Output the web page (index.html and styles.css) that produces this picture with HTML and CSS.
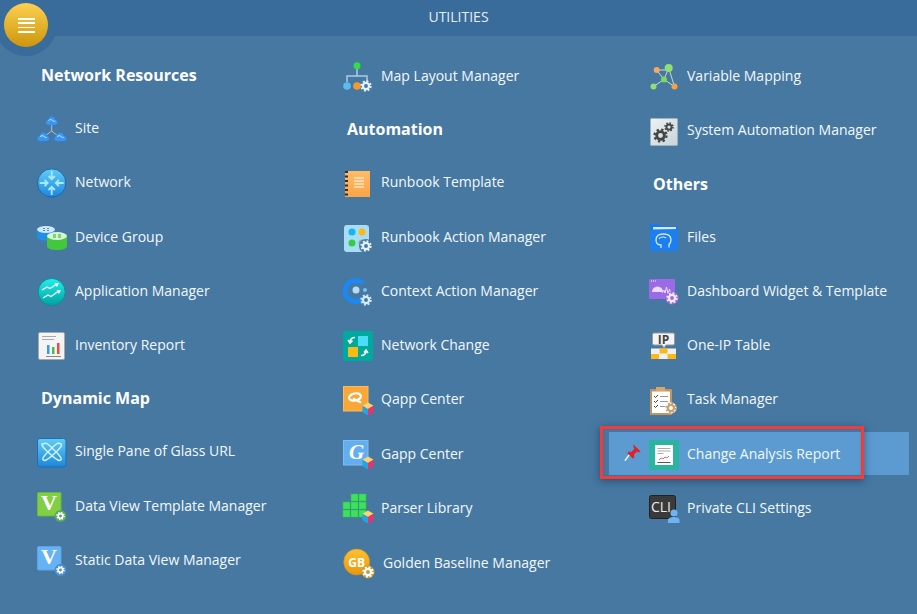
FILE: index.html
```html
<!DOCTYPE html>
<html lang="en">
<head>
<meta charset="utf-8">
<title>Utilities</title>
<link rel="stylesheet" href="styles.css">
</head>
<body>
<svg class="defs" aria-hidden="true">
  <defs>
    <linearGradient id="gNet" x1="0" y1="0" x2="0" y2="1"><stop offset="0" stop-color="#62cdf5"/><stop offset="1" stop-color="#1e86dc"/></linearGradient>
    <linearGradient id="gApp" x1="0" y1="0" x2="0" y2="1"><stop offset="0" stop-color="#20f0f0"/><stop offset="1" stop-color="#00a0a0"/></linearGradient>
    <linearGradient id="gGold" x1="0" y1="0" x2="0" y2="1"><stop offset="0" stop-color="#fdc132"/><stop offset="1" stop-color="#e8980c"/></linearGradient>
    <linearGradient id="gSys" x1="0" y1="0" x2="1" y2="1"><stop offset="0" stop-color="#eef2f3"/><stop offset="1" stop-color="#c6d4da"/></linearGradient>
    <linearGradient id="gBook" x1="0" y1="0" x2="0" y2="1"><stop offset="0" stop-color="#ffbb66"/><stop offset="1" stop-color="#fba448"/></linearGradient>
    <symbol id="gear" viewBox="0 0 16 16">
      <circle cx="8" cy="8" r="6.4" fill="none" stroke="currentColor" stroke-width="2.4" stroke-dasharray="2.51 2.51"/>
      <circle cx="8" cy="8" r="4.1" fill="none" stroke="currentColor" stroke-width="3"/>
    </symbol>
    <symbol id="cube" viewBox="0 0 12 14">
      <path d="M6 0.5 11.5 3.700 6 7 .5 3.700z" fill="#fdd36a"/>
      <path d="M.5 3.700 6 7v6.500L.5 10.300z" fill="#2aa2e0"/>
      <path d="M11.500 3.700 6 7v6.500l5.500-3.200z" fill="#e8336b"/>
    </symbol>
    <symbol id="cloud" viewBox="0 0 14 10">
      <rect x=".5" y="4.500" width="13" height="5.200" rx="2.600" fill="#3b97f5" stroke="#2a7fe0" stroke-width=".5"/>
      <circle cx="7" cy="4.200" r="3.700" fill="#3b97f5" stroke="#2a7fe0" stroke-width=".5"/>
      <rect x="2" y="4.800" width="10" height="3" fill="#3b97f5"/>
      <path d="M3.500 5C5 3.500 6.500 3.500 8 4.800s2 1 3 .6" fill="none" stroke="#cfe8ff" stroke-width="1"/>
    </symbol>
  </defs>
</svg>

<header class="topbar">UTILITIES</header>
<button class="menu-btn" type="button" aria-label="Menu"><span class="menu-lines"></span></button>

<main class="columns">
  <section class="col">
    <h2 class="heading">Network Resources</h2>
    <div class="row"><svg class="ico" viewBox="0 0 32 32"><path d="M15.700 12v7M15.700 19 9 24M15.700 19 22 24" stroke="#a9bfd0" stroke-width="1" fill="none"/><use href="#cloud" x="9.200" y="4" width="13" height="9.300"/><use href="#cloud" x=".5" y="20" width="13.500" height="9.600"/><use href="#cloud" x="17.500" y="20" width="13.500" height="9.600"/></svg><span class="label">Site</span></div>
    <div class="row"><svg class="ico" viewBox="0 0 32 32"><circle cx="15.700" cy="17" r="14.200" fill="url(#gNet)" stroke="#1b68ae" stroke-width="1"/><g stroke="#a6ebf7" stroke-width="1.800" fill="none"><path d="M15.700 5v8M12.500 10l3.200 3.200L18.900 10"/><path d="M15.700 29v-8M12.500 24l3.200-3.200 3.200 3.200"/><path d="M3.700 17h8M8.500 13.800l3.200 3.200-3.200 3.200"/><path d="M27.700 17h-8M22.900 13.800 19.700 17l3.200 3.200"/></g></svg><span class="label">Network</span></div>
    <div class="row"><svg class="ico" viewBox="0 0 32 32"><path d="M1 8.500V16c0 2 4 3.500 9 3.500s9-1.500 9-3.500V8.500z" fill="#1f8fe8"/><ellipse cx="10" cy="8.500" rx="9" ry="3.500" fill="#cfe8fb"/><path d="M7 7.500h2M11 9.500h2M7 9.500h2M11 7.500h2" stroke="#4a8fd0" stroke-width="1"/><path d="M11 15v10c0 2.500 4 4 10 4s10-1.500 10-4V15z" fill="#41c83c"/><ellipse cx="21" cy="15" rx="10" ry="4" fill="#d6f5cf"/><path d="M17 14h3M22 16h3M17 16h3M22 14h3" stroke="#3aa538" stroke-width="1"/></svg><span class="label">Device Group</span></div>
    <div class="row"><svg class="ico" viewBox="0 0 32 32"><circle cx="15.700" cy="17" r="13.600" fill="url(#gApp)" stroke="#148a96" stroke-width="1"/><g stroke="#fff" stroke-width="1.200" fill="none"><path d="M6 15l5-3 3 1.500 6-4"/><path d="M7 23l5-3 3 1.500 7-5"/></g><path d="M23 8l-4.500.5 2.500 3.500zM25 15l-4.500.5 2.500 3.500z" fill="#fff"/></svg><span class="label">Application Manager</span></div>
    <div class="row"><svg class="ico" viewBox="0 0 32 32"><rect x="2.500" y="3.500" width="26" height="27" rx="1.500" fill="#f4f4f4" stroke="#a8a8a8"/><path d="M6 7.500h14M6 10.500h12" stroke="#aaa" stroke-width="1"/><rect x="11" y="16" width="2.500" height="9" fill="#3c9ae0"/><rect x="16" y="18" width="2.500" height="7" fill="#56b84c"/><rect x="21" y="14" width="2.500" height="11" fill="#ea4a40"/><path d="M10 27.500h15" stroke="#888" stroke-width="1"/></svg><span class="label">Inventory Report</span></div>
    <h2 class="heading">Dynamic Map</h2>
    <div class="row"><svg class="ico" viewBox="0 0 32 32"><rect x="1.500" y="3.500" width="28.500" height="28.500" rx="2.500" fill="url(#gNet)" stroke="#1d6dbb"/><g fill="none" stroke="#cdf3fb" stroke-width="1.500"><path d="M7 9c4-2 6 1 9 4 3 3 7 6 9 10 1 2-1 3-3 2-4-2-7-5-10-8-3-3-7-6-6-8z"/><path d="M25 9c-4-2-6 1-9 4-3 3-7 6-9 10-1 2 1 3 3 2 4-2 7-5 10-8 3-3 7-6 5-8z"/></g></svg><span class="label">Single Pane of Glass URL</span></div>
    <div class="row"><svg class="ico" viewBox="0 0 32 32"><rect x="1.500" y="2.500" width="23.500" height="23.500" rx="1" fill="#82cf46" stroke="#6cb63a"/><text x="13" y="20" class="v-letter">V</text><circle cx="24.500" cy="26" r="6" fill="#5aa860"/><use href="#gear" x="20" y="21.500" width="9" height="9" color="#fff"/></svg><span class="label">Data View Template Manager</span></div>
    <div class="row"><svg class="ico" viewBox="0 0 32 32"><rect x="1.500" y="2.500" width="23.500" height="23.500" rx="1" fill="#66b2f5" stroke="#5aa3e6"/><text x="13" y="20" class="v-letter">V</text><circle cx="24.500" cy="26" r="6" fill="#4b8fd0"/><use href="#gear" x="20" y="21.500" width="9" height="9" color="#fff"/></svg><span class="label">Static Data View Manager</span></div>
  </section>

  <section class="col">
    <div class="row"><svg class="ico" viewBox="0 0 32 32"><path d="M15 6v10M5 22v-6h20v6" fill="none" stroke="#a9cbea" stroke-width="1.500"/><circle cx="15" cy="5.700" r="3.500" fill="#30e040"/><circle cx="5" cy="26" r="3.800" fill="#5bbcf0"/><circle cx="15" cy="26" r="3.800" fill="#f59a2a"/><use href="#gear" x="18" y="20" width="12" height="12" color="#e4f3fd"/></svg><span class="label">Map Layout Manager</span></div>
    <h2 class="heading">Automation</h2>
    <div class="row"><svg class="ico" viewBox="0 0 32 32"><rect x="3" y="5" width="25" height="26" fill="url(#gBook)"/><path d="M4.500 5v26" stroke="#2f2f2f" stroke-width="3" stroke-dasharray="2 2.500"/><path d="M12 12h10M12 15h10M12 18h10M12 21h10" stroke="#fff" stroke-width="1"/></svg><span class="label">Runbook Template</span></div>
    <div class="row"><svg class="ico" viewBox="0 0 32 32"><rect x="2" y="4" width="25" height="27" rx="3" fill="#a9ddf5"/><circle cx="10" cy="11" r="3.500" fill="#13b5f5"/><circle cx="20" cy="11" r="3.500" fill="#fdb913"/><circle cx="10" cy="22" r="3.500" fill="#30d040"/><circle cx="20" cy="22" r="3.500" fill="#8aa"/><circle cx="24" cy="25" r="7" fill="#4678a2"/><use href="#gear" x="18" y="19" width="12" height="12" color="#e4f3fd"/></svg><span class="label">Runbook Action Manager</span></div>
    <div class="row"><svg class="ico" viewBox="0 0 32 32"><path d="M21 8.600A10.500 10.500 0 1 0 21 23.400" fill="none" stroke="#1e88f0" stroke-width="5"/><circle cx="14" cy="15" r="3.500" fill="#b5dbf5"/><circle cx="23" cy="15" r="2" fill="#7fc0ee"/><use href="#gear" x="18" y="19" width="12" height="12" color="#d4ecfb"/></svg><span class="label">Context Action Manager</span></div>
    <div class="row"><svg class="ico" viewBox="0 0 32 32"><rect x="1" y="2" width="30" height="30" rx="2" fill="#00a99d"/><rect x="16" y="7" width="10" height="10" fill="#4cdcf5"/><rect x="6" y="18" width="10" height="10" fill="#fdb913"/><path d="M13 8.500c-3 0-5 1.500-5 5M6 11l2 3 2.500-2.500M19 26.500c3 0 5-1.500 5-5M22 23.500l2-2.500 2 3" fill="none" stroke="#fff" stroke-width="1.600"/></svg><span class="label">Network Change</span></div>
    <div class="row"><svg class="ico" viewBox="0 0 32 32"><rect x="1.500" y="3.500" width="24.500" height="24.500" fill="#f9a838" stroke="#fcbb5c"/><ellipse cx="13" cy="14" rx="6" ry="3.600" transform="rotate(-12 13 14)" fill="none" stroke="#fff" stroke-width="2.200"/><path d="M11 15.500l8 4" stroke="#fff" stroke-width="2"/><use href="#cube" x="20" y="19" width="12" height="14"/></svg><span class="label">Qapp Center</span></div>
    <div class="row"><svg class="ico" viewBox="0 0 32 32"><rect x="1.500" y="2.500" width="24.500" height="24.500" fill="#64aef0" stroke="#7cbcf4"/><text x="7" y="21" class="g-letter">G</text><use href="#cube" x="20" y="18" width="12" height="14"/></svg><span class="label">Gapp Center</span></div>
    <div class="row"><svg class="ico" viewBox="0 0 32 32"><g fill="#3fe060" stroke="#2cc34a" stroke-width=".6"><rect x="9" y="2" width="7" height="7"/><rect x="17" y="2" width="7" height="7"/><rect x="1" y="10" width="7" height="7"/><rect x="9" y="10" width="7" height="7"/><rect x="17" y="10" width="7" height="7"/><rect x="1" y="18" width="7" height="7"/><rect x="9" y="18" width="7" height="7"/><rect x="17" y="18" width="7" height="7"/></g><use href="#cube" x="20" y="18" width="12" height="14"/></svg><span class="label">Parser Library</span></div>
    <div class="row row-gb"><svg class="ico" viewBox="0 0 32 32"><circle cx="14.700" cy="16" r="13" fill="url(#gGold)" stroke="#d98f10" stroke-width=".6"/><text x="14.700" y="20.500" class="gb-letter">GB</text><circle cx="26" cy="26" r="6.500" fill="#c89a3c"/><use href="#gear" x="20" y="20" width="12" height="12" color="#fff"/></svg><span class="label">Golden Baseline Manager</span></div>
  </section>

  <section class="col">
    <div class="row"><svg class="ico" viewBox="0 0 32 32"><path d="M8.700 10 16 19.500 5.500 26.500M20.700 8 16 19.500 26.500 26.500M8.700 10H20.700M20.700 8l5.800 18.500" stroke="#c8d8d8" stroke-width="1" fill="none"/><circle cx="8.700" cy="10" r="3" fill="#f8a860"/><circle cx="20.700" cy="8" r="4" fill="#8fe070"/><circle cx="16" cy="19.500" r="3" fill="#7adc55"/><circle cx="5.500" cy="26.500" r="3" fill="#8fe070"/><circle cx="26.500" cy="26.500" r="3" fill="#f8a040"/></svg><span class="label">Variable Mapping</span></div>
    <div class="row"><svg class="ico" viewBox="0 0 32 32"><rect x="2.500" y="4.500" width="27" height="27" rx="1" fill="url(#gSys)" stroke="#9fb2bd"/><use href="#gear" x="5" y="14" width="15" height="15" color="#454545"/><use href="#gear" x="16" y="8" width="10" height="10" color="#454545"/></svg><span class="label">System Automation Manager</span></div>
    <h2 class="heading heading-low">Others</h2>
    <div class="row"><svg class="ico" viewBox="0 0 32 32"><path d="M2 3h9l2 2h15a2 2 0 0 1 2 2v21a2 2 0 0 1-2 2H4a2 2 0 0 1-2-2z" fill="#1a78ea"/><path d="M5 6h23v2.500H5z" fill="#d9e9fb"/><path d="M2 9l28-1v20a2 2 0 0 1-2 2H4a2 2 0 0 1-2-2z" fill="#1c7ff0"/><path d="M13 27v-3c-3 0-5-2-5-5 0-4 3-6 7.500-6s7.500 2 7.500 6c0 2-1 3.500-2 4.500v3" fill="none" stroke="#d4e9fb" stroke-width="1.300"/><path d="M11 18c1-2.500 5-2.500 7-1" fill="none" stroke="#d4e9fb" stroke-width="1.100"/></svg><span class="label">Files</span></div>
    <div class="row"><svg class="ico" viewBox="0 0 32 32"><rect x="1" y="4" width="26" height="20" rx="1" fill="#9c6ae6"/><path d="M3 6h1M5 6h1M7 6h1" stroke="#fff" stroke-width="1"/><path d="M4 17a5.500 5.500 0 0 1 11 0z" fill="#eadcfb"/><path d="M14 18l2-3 1 3 1.500-6 1.500 7 1.500-5 1 4" fill="none" stroke="#eadcfb" stroke-width="1"/><circle cx="24" cy="23" r="6.500" fill="#9c6ae6"/><use href="#gear" x="18" y="17" width="12" height="12" color="#f3eafd"/></svg><span class="label">Dashboard Widget &amp; Template</span></div>
    <div class="row"><svg class="ico" viewBox="0 0 32 32"><path d="M6 4h19a1.500 1.500 0 0 1 1.500 1.500v9A1.500 1.500 0 0 1 25 16h-7l-2 3-2-3H6a1.500 1.500 0 0 1-1.500-1.500v-9A1.500 1.500 0 0 1 6 4z" fill="#f4f4f4" stroke="#9a9a9a"/><text x="15.500" y="14.500" class="ip-letter">IP</text><rect x="3" y="19.500" width="25" height="10.500" fill="#f0f0f4"/><rect x="11.500" y="19.500" width="8" height="5" fill="#fdb913"/><rect x="3" y="25" width="8" height="5" fill="#fdb913"/><rect x="19.500" y="25" width="8.500" height="5" fill="#fdb913"/></svg><span class="label">One-IP Table</span></div>
    <div class="row"><svg class="ico" viewBox="0 0 32 32"><rect x="2" y="6" width="22" height="26" rx="1" fill="#c4945a"/><rect x="4" y="8.500" width="18" height="21.500" fill="#fff"/><rect x="8" y="4" width="9" height="4" fill="#d4a86c"/><path d="M6 13l1.500 1.500L10 12M6 18l1.500 1.500L10 17M6 23l1.500 1.500L10 22" fill="none" stroke="#444" stroke-width="1"/><path d="M12 13.500h8M12 18.500h8M12 23.500h5" stroke="#999" stroke-width="1"/><circle cx="23" cy="25" r="5.500" fill="#fff"/><use href="#gear" x="17" y="19" width="12" height="12" color="#c8a070"/></svg><span class="label">Task Manager</span></div>
    <div class="row">
      <div class="item-active">
        <svg class="pin" viewBox="0 0 20 20"><path d="M2 18.500 7 12" stroke="#fff" stroke-width="1.500"/><path d="M11 1.500 18.500 9l-2 1-1.500-1-3.500 3 .5 3-1.500 1.500-6-6L6 9l3 .5 3-3.500-1-1.500z" fill="#e0202a"/></svg>
        <svg class="ico" viewBox="0 0 32 32"><rect x="1" y="2" width="30" height="30" rx="2" fill="#2ab5a0"/><rect x="7" y="7" width="18" height="20" fill="#fff"/><path d="M9.500 10.500h13M9.500 13h13M9.500 15.500h6" stroke="#aaa" stroke-width="1"/><path d="M11 22l2-2 2 1 2-2 2 1 2-2" fill="none" stroke="#e86a6a" stroke-width="1"/><path d="M9.500 24.500h13" stroke="#555" stroke-width="1"/></svg>
        <span class="label">Change Analysis Report</span>
        <span class="callout"></span>
      </div>
    </div>
    <div class="row"><svg class="ico" viewBox="0 0 32 32"><rect x="1.500" y="3.500" width="26" height="23" rx="2" fill="#3a3a3a" stroke="#222"/><text x="13" y="20" class="cli-letter">CLI</text><circle cx="26" cy="21" r="3.500" fill="#6cb4f5"/><path d="M20 31v-3c0-2 3-3 6-3s5.500 1 5.500 3v3z" fill="#6cb4f5"/></svg><span class="label">Private CLI Settings</span></div>
  </section>
</main>
</body>
</html>
```

FILE: styles.css
```css
* { box-sizing: border-box; }

html, body {
  margin: 0;
  height: 100%;
}

body {
  position: relative;
  overflow: hidden;
  background: #4678a2;
  color: #f3f8fc;
  font-family: "Open Sans", "Liberation Sans", sans-serif;
  font-size: 14px;
}

.defs {
  position: absolute;
  width: 0;
  height: 0;
}

.topbar {
  height: 36px;
  line-height: 33px;
  background: #396b9b;
  color: #e6eef5;
  font-size: 14px;
  text-align: center;
}

.menu-btn {
  position: absolute;
  left: 4px;
  top: 3px;
  width: 44px;
  height: 44px;
  padding: 0;
  border: 0;
  border-radius: 50%;
  background: linear-gradient(#fdd050, #cc960c);
  box-shadow: 0 0 0 9px #396b9b;
  display: flex;
  align-items: center;
  justify-content: center;
}

.menu-lines {
  width: 17px;
  height: 15px;
  border-top: 2px solid #fff;
  border-bottom: 2px solid #fff;
  position: relative;
}

.menu-lines::before,
.menu-lines::after {
  content: "";
  position: absolute;
  left: 0;
  right: 0;
  height: 1.5px;
  background: #fff;
}

.menu-lines::before { top: 2.5px; }
.menu-lines::after { top: 7px; }

.columns {
  display: grid;
  grid-template-columns: repeat(3, 306px);
  padding: 12.525px 0 0 36px;
}

.col {
  display: flex;
  flex-direction: column;
}

.heading {
  height: 52px;
  margin: 0;
  padding-left: 5px;
  display: flex;
  align-items: center;
  font-size: 16px;
  font-weight: 700;
  color: #fff;
}

.heading-low { padding-top: 2px; }

.row {
  height: 54.25px;
  display: flex;
  align-items: center;
  gap: 7px;
}

.row-gb { gap: 9px; }
.row-gb .label { margin-top: 2px; }

.ico {
  flex: none;
  width: 32px;
  height: 32px;
  margin-top: 1px;
  overflow: visible;
}

.label { white-space: nowrap; }

.item-active {
  position: relative;
  width: 300px;
  height: 43px;
  margin-left: -39px;
  padding-left: 39px;
  display: flex;
  align-items: center;
  gap: 7px;
  background: #5b9bd1;
}

.pin {
  position: absolute;
  left: 14px;
  top: 11px;
  width: 19px;
  height: 19px;
}

.callout {
  position: absolute;
  left: -9px;
  top: -6px;
  width: 264px;
  height: 53px;
  border: 3px solid #f23c3c;
  box-shadow: 0 2px 8px rgba(20, 40, 70, .55), inset 0 0 3px rgba(20, 40, 70, .2);
}

.v-letter {
  font-family: "Liberation Serif", serif;
  font-size: 22px;
  font-weight: 700;
  fill: #fff;
  text-anchor: middle;
}

.g-letter {
  font-family: "Liberation Serif", serif;
  font-size: 21px;
  font-weight: 700;
  font-style: italic;
  fill: #fff;
}

.gb-letter {
  font-family: "Open Sans", sans-serif;
  font-size: 12px;
  font-weight: 700;
  fill: #fff;
  text-anchor: middle;
}

.ip-letter {
  font-family: "Open Sans", sans-serif;
  font-size: 12px;
  font-weight: 700;
  fill: #444;
  text-anchor: middle;
}

.cli-letter {
  font-family: "Open Sans", sans-serif;
  font-size: 14px;
  fill: #eee;
  text-anchor: middle;
}
```
